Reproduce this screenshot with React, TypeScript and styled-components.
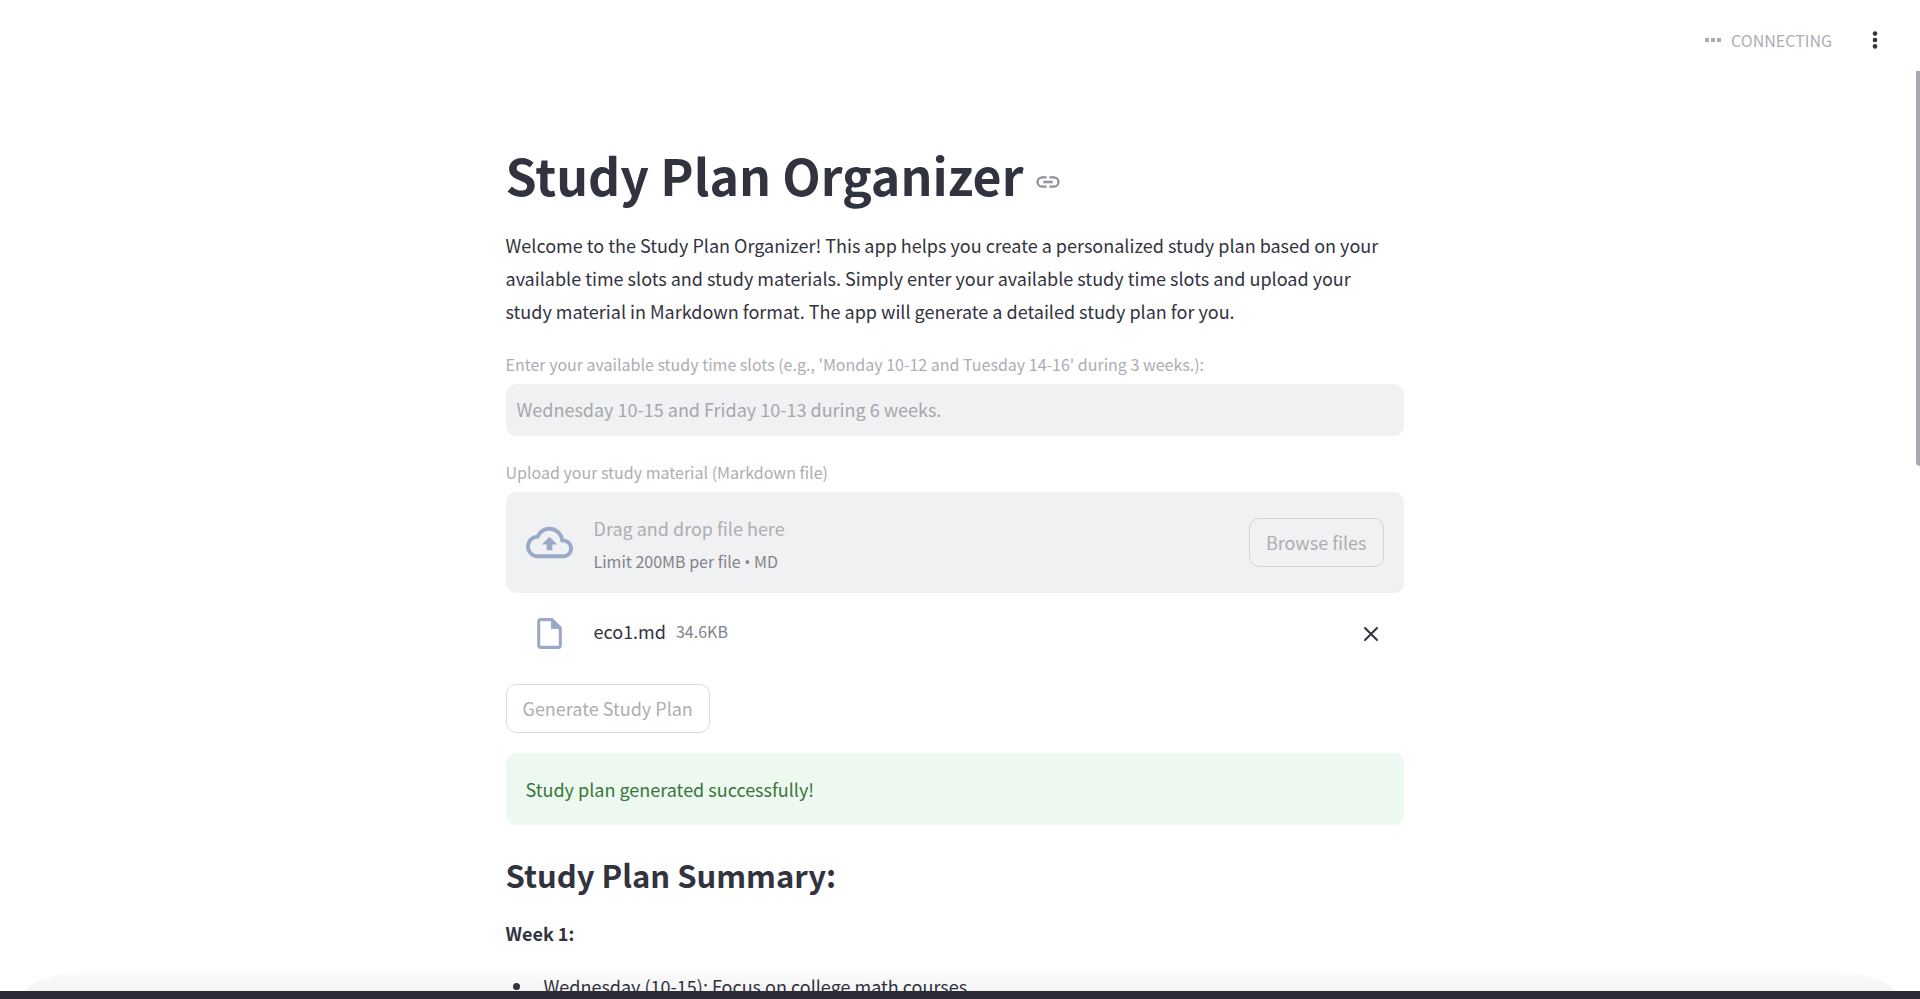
import React from "react";
import styled, { createGlobalStyle } from "styled-components";

const Global = createGlobalStyle`
  *, *::before, *::after { box-sizing: border-box; }
  html, body, #root { height: 100%; }
  body {
    margin: 0;
    background: #ffffff;
    color: #31333f;
    font-family: "Noto Sans CJK SC", "Noto Sans", sans-serif;
    font-size: 18px;
    line-height: 33px;
  }
  button, input { font: inherit; color: inherit; }
`;

const Screen = styled.div`
  position: relative;
  display: flex;
  flex-direction: column;
  height: 100vh;
  overflow: hidden;
`;

const Header = styled.header`
  flex: none;
  display: flex;
  align-items: center;
  justify-content: flex-end;
  gap: 32px;
  height: 80px;
  padding-right: 34px;
`;

const Status = styled.div`
  display: flex;
  align-items: center;
  gap: 10px;
  color: #adadb5;
  font-size: 16px;
  line-height: 24px;
`;

const IconButton = styled.button`
  display: flex;
  align-items: center;
  justify-content: center;
  width: 22px;
  height: 32px;
  padding: 0;
  border: 0;
  background: none;
  cursor: pointer;
`;

const Content = styled.main`
  flex: 1;
  min-height: 0;
  overflow: hidden;
  padding: 64px 11px 0 0;
`;

const Column = styled.div`
  width: 100%;
  max-width: 898px;
  margin: 0 auto;
`;

const Title = styled.h1`
  display: flex;
  align-items: center;
  gap: 11px;
  margin: 0 0 25px;
  font-size: 50px;
  font-weight: 700;
  line-height: 60px;
`;

const Anchor = styled.a`
  display: flex;
  padding-top: 16px;
  color: #8f9098;
`;

const Paragraph = styled.p`
  margin: 0 0 23px;
  padding-right: 10px;
`;

const Label = styled.label`
  display: block;
  margin-bottom: 7px;
  color: #adadb2;
  font-size: 16px;
  line-height: 26px;
`;

const TextInput = styled.input`
  display: block;
  width: 100%;
  height: 52px;
  margin-bottom: 23px;
  padding: 0 11px 2px;
  border: 0;
  border-radius: 10px;
  background: #f0f1f3;
  &:disabled { color: #a6a7ac; }
`;

const DropZone = styled.section`
  display: flex;
  align-items: center;
  gap: 20px;
  min-height: 101px;
  padding: 0 20px;
  border-radius: 10px;
  background: #f0f1f3;
`;

const DropText = styled.div`
  flex: 1;
  padding-top: 4px;
  color: #adadb2;
`;

const Limit = styled.div`
  color: #83848b;
  font-size: 16px;
  line-height: 32px;
`;

const Dot = styled.span`
  font-family: "Open Sans", sans-serif;
`;

const IconSlot = styled.span`
  display: flex;
  justify-content: center;
  width: 48px;
  color: #9ba9c9;
`;

const Button = styled.button<{ $border: string }>`
  height: 49px;
  padding: 0 16px;
  border: 1px solid ${(p) => p.$border};
  border-radius: 10px;
  background: none;
  &:disabled { color: #adadb2; }
`;

const FileRow = styled.div`
  display: flex;
  align-items: center;
  gap: 20px;
  height: 81px;
  margin-bottom: 10px;
  padding: 0 22px 0 20px;
`;

const FileName = styled.div`
  flex: 1;
  display: flex;
  gap: 10px;
  padding-bottom: 4px;
`;

const FileSize = styled.small`
  color: #83848b;
  font-size: 16px;
`;

const Alert = styled.div`
  margin: 20px 0 27px;
  padding: 20px 20px 19px;
  border-radius: 10px;
  background: #edf8f0;
  color: #37773a;
`;

const Subtitle = styled.h2`
  margin: 0 0 19px;
  font-size: 31px;
  font-weight: 600;
  line-height: 46px;
`;

const Week = styled.p`
  margin: 0 0 20px;
  font-weight: 600;
`;

const Days = styled.ul`
  margin: 0;
  padding: 0;
  list-style: none;
`;

const Day = styled.li`
  display: flex;
  align-items: center;
  gap: 24px;
  padding-left: 7px;
  &::before {
    content: "";
    width: 7px;
    height: 7px;
    border-radius: 50%;
    background: currentColor;
  }
`;

const ScrollThumb = styled.div`
  position: absolute;
  top: 71px;
  right: 0;
  width: 4px;
  height: 395px;
  border-radius: 0 0 0 4px;
  background: #a8a8b0;
`;

const Dock = styled.footer`
  position: relative;
  flex: none;
  height: 8px;
  background: #2a2b37;
  &::before {
    content: "";
    position: absolute;
    left: 27px;
    right: 27px;
    bottom: 8px;
    height: 21px;
    border-radius: 90px 90px 0 0 / 21px 21px 0 0;
    background: linear-gradient(rgba(0, 0, 0, 0.01), rgba(0, 0, 0, 0.045));
  }
`;

export default function App() {
  return (
    <Screen>
      <Global />
      <Header>
        <Status>
          <svg width="16" height="4" viewBox="0 0 16 4" fill="currentColor" aria-hidden="true">
            <path d="M0 0h4v4H0zM6 0h4v4H6zM12 0h4v4h-4z" />
          </svg>
          CONNECTING
        </Status>
        <IconButton aria-label="Main menu">
          <svg width="6" height="18" viewBox="0 0 6 18" fill="#31333f">
            <circle cx="3" cy="2.6" r="2.3" />
            <circle cx="3" cy="9" r="2.3" />
            <circle cx="3" cy="15.4" r="2.3" />
          </svg>
        </IconButton>
      </Header>
      <Content>
        <Column>
          <Title id="study-plan-organizer">
            Study Plan Organizer
            <Anchor href="#study-plan-organizer" aria-label="Link to heading">
              <svg width="28" height="28" viewBox="0 0 24 24" fill="none" stroke="currentColor" strokeWidth="2">
                <path d="M10.800 8H7a4 4 0 0 0 0 8h3.800M13.200 8H17a4 4 0 0 1 0 8h-3.800M8 12h8" />
              </svg>
            </Anchor>
          </Title>
          <Paragraph>
            Welcome to the Study Plan Organizer! This app helps you create a personalized study plan based on your
            available time slots and study materials. Simply enter your available study time slots and upload your
            study material in Markdown format. The app will generate a detailed study plan for you.
          </Paragraph>
          <Label htmlFor="slots">
            Enter your available study time slots (e.g., 'Monday 10-12 and Tuesday 14-16' during 3 weeks.):
          </Label>
          <TextInput id="slots" type="text" disabled defaultValue="Wednesday 10-15 and Friday 10-13 during 6 weeks." />
          <Label htmlFor="browse">Upload your study material (Markdown file)</Label>
          <DropZone>
            <IconSlot>
              <svg width="47" height="47" viewBox="0 0 24 24" fill="currentColor" aria-hidden="true">
                <path d="M19.35 10.04A7.49 7.49 0 0 0 12 4C9.11 4 6.6 5.64 5.35 8.04A5.994 5.994 0 0 0 0 14c0 3.31 2.69 6 6 6h13c2.76 0 5-2.24 5-5 0-2.64-2.05-4.78-4.65-4.96zM19 18H6c-2.21 0-4-1.79-4-4 0-2.05 1.53-3.76 3.56-3.97l1.07-.11.5-.95A5.469 5.469 0 0 1 12 6c2.62 0 4.88 1.86 5.39 4.43l.3 1.5 1.53.11A2.98 2.98 0 0 1 22 15c0 1.65-1.35 3-3 3zM8 13h2.55v3h2.9v-3H16l-4-4z" />
              </svg>
            </IconSlot>
            <DropText>
              Drag and drop file here
              <Limit>
                Limit 200MB per file <Dot>•</Dot> MD
              </Limit>
            </DropText>
            <Button id="browse" type="button" disabled $border="#d1d2d5">
              Browse files
            </Button>
          </DropZone>
          <FileRow>
            <IconSlot>
              <svg width="37" height="37" viewBox="0 0 24 24" fill="currentColor" aria-hidden="true">
                <path d="M14 2H6c-1.100 0-1.990.9-1.990 2L4 20c0 1.100.89 2 1.990 2H18c1.100 0 2-.9 2-2V8l-6-6zM6 20V4h7v5h5v11H6z" />
              </svg>
            </IconSlot>
            <FileName>
              eco1.md
              <FileSize>34.6KB</FileSize>
            </FileName>
            <IconButton aria-label="Remove file">
              <svg width="16" height="16" viewBox="0 0 16 16" stroke="#31333f" strokeWidth="2" strokeLinecap="round">
                <path d="M2 2l12 12M14 2L2 14" />
              </svg>
            </IconButton>
          </FileRow>
          <Button type="button" disabled $border="#d9dadd">
            Generate Study Plan
          </Button>
          <Alert role="status">Study plan generated successfully!</Alert>
          <Subtitle>Study Plan Summary:</Subtitle>
          <Week>Week 1:</Week>
          <Days>
            <Day>Wednesday (10-15): Focus on college math courses</Day>
          </Days>
        </Column>
      </Content>
      <ScrollThumb />
      <Dock />
    </Screen>
  );
}
